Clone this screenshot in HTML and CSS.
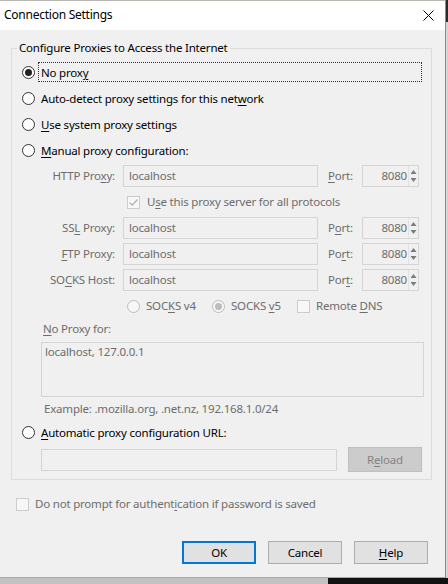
FILE: index.html
```html
<!DOCTYPE html>
<html>
<head>
<meta charset="utf-8">
<link rel="stylesheet" href="styles.css">
</head>
<body>
<div class="screen">
  <div class="toprow">
    <div class="win">
      <div class="titlebar">
        <span class="title">Connection Settings</span>
        <svg class="close" width="11" height="11" viewBox="0 0 11 11"><path d="M0.5 0.5L10.5 10.5M10.5 0.5L0.5 10.5" stroke="#000" stroke-width="1" fill="none"/></svg>
      </div>
      <div class="content">
        <fieldset class="group">
          <legend>Configure Proxies to Access the Internet</legend>
          <div class="opt first">
            <span class="radio on"></span><span class="lbl focus">No prox<u>y</u></span>
          </div>
          <div class="opt">
            <span class="radio"></span><span class="lbl">Auto-detect proxy settings for this net<u>w</u>ork</span>
          </div>
          <div class="opt">
            <span class="radio"></span><span class="lbl"><u>U</u>se system proxy settings</span>
          </div>
          <div class="opt">
            <span class="radio"></span><span class="lbl"><u>M</u>anual proxy configuration:</span>
          </div>
          <div class="manual">
            <div class="prow">
              <span class="plabel">HTTP Pro<u>x</u>y:</span>
              <span class="field host">localhost</span>
              <span class="portlbl"><u>P</u>ort:</span>
              <span class="field port"><span class="num">8080</span><span class="spin"><svg width="7" height="16" viewBox="0 0 7 16"><path d="M3.5 2L6.5 6H0.5Z M3.5 14L6.5 10H0.5Z" fill="#7a7a7a"/></svg></span></span>
            </div>
            <div class="crow">
              <span class="check dis"><svg width="11" height="11" viewBox="0 0 11 11"><path d="M1.5 5.5L4.2 8.2L9.5 2.5" stroke="#b0b0b0" stroke-width="1.2" fill="none"/></svg></span>
              <span class="dlbl">U<u>s</u>e this proxy server for all protocols</span>
            </div>
            <div class="prow">
              <span class="plabel">SS<u>L</u> Proxy:</span>
              <span class="field host">localhost</span>
              <span class="portlbl">P<u>o</u>rt:</span>
              <span class="field port"><span class="num">8080</span><span class="spin"><svg width="7" height="16" viewBox="0 0 7 16"><path d="M3.5 2L6.5 6H0.5Z M3.5 14L6.5 10H0.5Z" fill="#7a7a7a"/></svg></span></span>
            </div>
            <div class="prow">
              <span class="plabel"><u>F</u>TP Proxy:</span>
              <span class="field host">localhost</span>
              <span class="portlbl">Po<u>r</u>t:</span>
              <span class="field port"><span class="num">8080</span><span class="spin"><svg width="7" height="16" viewBox="0 0 7 16"><path d="M3.5 2L6.5 6H0.5Z M3.5 14L6.5 10H0.5Z" fill="#7a7a7a"/></svg></span></span>
            </div>
            <div class="prow">
              <span class="plabel">SO<u>C</u>KS Host:</span>
              <span class="field host">localhost</span>
              <span class="portlbl">Por<u>t</u>:</span>
              <span class="field port"><span class="num">8080</span><span class="spin"><svg width="7" height="16" viewBox="0 0 7 16"><path d="M3.5 2L6.5 6H0.5Z M3.5 14L6.5 10H0.5Z" fill="#7a7a7a"/></svg></span></span>
            </div>
            <div class="srow">
              <span class="sitem"><span class="radio dis"></span><span class="dlbl">SOC<u>K</u>S v4</span></span>
              <span class="sitem"><span class="radio dis on"></span><span class="dlbl">SOCKS <u>v</u>5</span></span>
              <span class="sitem last"><span class="check dis"></span><span class="dlbl">Remote <u>D</u>NS</span></span>
            </div>
          </div>
          <div class="nplabel dlbl"><u>N</u>o Proxy for:</div>
          <div class="tarea">localhost, 127.0.0.1</div>
          <div class="example dlbl">Example: .mozilla.org, .net.nz, 192.168.1.0/24</div>
          <div class="opt auto">
            <span class="radio"></span><span class="lbl"><u>A</u>utomatic proxy configuration URL:</span>
          </div>
          <div class="urlrow">
            <span class="field url"></span>
            <span class="reload">R<u>e</u>load</span>
          </div>
        </fieldset>
        <div class="auth">
          <span class="check dis"></span><span class="dlbl">Do not prompt for authent<u>i</u>cation if password is saved</span>
        </div>
        <div class="buttons">
          <span class="btn default">OK</span>
          <span class="btn">Cancel</span>
          <span class="btn"><u>H</u>elp</span>
        </div>
      </div>
    </div>
    <div class="rstrip"><div class="rdark"></div></div>
  </div>
  <div class="bstrip"><div class="bgray"></div><div class="bblack"></div></div>
</div>
</body>
</html>
```

FILE: styles.css
```css
* { box-sizing: border-box; }
html, body { margin: 0; padding: 0; }
body {
  width: 448px;
  height: 584px;
  overflow: hidden;
  font-family: "Noto Sans", "Open Sans", sans-serif;
  font-size: 11.5px;
  letter-spacing: -0.2px;
  line-height: 16px;
  color: #000;
  background: #c8c8c8;
  white-space: nowrap;
}
u { text-decoration: underline; text-underline-offset: 2px; text-decoration-thickness: 1px; }
.screen { display: flex; flex-direction: column; width: 448px; height: 584px; }
.toprow { display: flex; height: 578px; }
.win {
  width: 446px;
  height: 578px;
  border-right: 1px solid #8c8c8c;
  border-bottom: 1px solid #a8a8a8;
  border-top: 1px solid #b8b8b0;
  background: #f0f0f0;
  display: flex;
  flex-direction: column;
}
.rstrip { width: 2px; background: #d4d4d4; }
.rdark { height: 22px; background: #2a2a2a; }
.bstrip { display: flex; height: 6px; }
.bgray { width: 328px; background: #c2c2c2; }
.bblack { flex: 1; background: #111; }

.titlebar {
  height: 29px;
  background: #fff;
  display: flex;
  align-items: center;
  padding-left: 4px;
  padding-right: 11px;
}
.title { flex: 1; padding-bottom: 1px; font-size: 12px; letter-spacing: -0.25px; }
.close { margin-bottom: 1px; }

.content { flex: 1; display: flex; flex-direction: column; }

.group {
  margin: 10px 0 0 11px;
  width: 421px;
  padding: 0 0 7px 0;
  border: 1px solid #dcdcdc;
  min-width: 0;
}
.group legend {
  margin-left: 5px;
  padding: 0 2px;
  line-height: 16px;
}

.opt { display: flex; align-items: center; height: 20px; margin-top: 6px; padding-left: 10px; }
.opt.first { margin-top: 6px; }
.opt.auto { margin-top: 3px; }
.lbl {
  margin-left: 3px;
  padding: 0 2px;
  height: 20px;
  line-height: 19px;
  border: 1px solid transparent;
}
.lbl.focus { flex: 1; margin-right: 9px; border: 1px dotted #333; }

.radio {
  width: 13px; height: 13px;
  border: 1px solid #333;
  border-radius: 50%;
  background: #fff;
  display: flex; align-items: center; justify-content: center;
  flex: none;
}
.radio.on::after { content: ""; width: 7px; height: 7px; border-radius: 50%; background: #222; }
.radio.dis { border-color: #bcbcbc; background: #f7f7f7; }
.radio.dis.on::after { background: #bcbcbc; }

.check {
  width: 13px; height: 13px;
  border: 1px solid #333;
  background: #fff;
  display: flex; align-items: center; justify-content: center;
  flex: none;
}
.check.dis { border-color: #cccccc; background: #f7f7f7; }

.dlbl { color: #6d6d6d; }

.manual { display: flex; flex-direction: column; gap: 4px; margin-top: 5px; }
.prow { display: flex; align-items: center; height: 22px; }
.plabel { width: 103px; text-align: right; color: #6d6d6d; }
.field {
  height: 22px;
  border: 1px solid #d4d4d4;
  background: #f0f0f0;
  color: #6d6d6d;
  display: flex;
  align-items: center;
}
.host { width: 195px; margin-left: 8px; padding-left: 5px; }
.portlbl { width: 34px; margin-left: 10px; color: #6d6d6d; }
.port { width: 57px; }
.num { flex: 1; text-align: right; padding-right: 1px; }
.spin { width: 10px; height: 20px; display: flex; align-items: center; justify-content: center; border-left: 1px solid #e2e2e2; }

.crow { display: flex; align-items: center; height: 22px; padding-left: 115px; }
.crow .dlbl { margin-left: 7px; }

.srow { display: flex; align-items: center; height: 22px; padding-left: 115px; }
.sitem { display: flex; align-items: center; width: 85px; flex: none; }
.sitem.last { width: auto; }
.sitem .dlbl { margin-left: 6px; }

.nplabel { height: 20px; line-height: 20px; margin-top: 2px; padding-left: 31px; }
.tarea {
  margin: 3px 0 0 29px;
  width: 383px;
  height: 55px;
  border: 1px solid #d4d4d4;
  padding: 1px 3px;
  color: #6d6d6d;
}
.example { height: 20px; line-height: 20px; margin-top: 2px; padding-left: 32px; }

.urlrow { display: flex; align-items: center; height: 25px; margin-top: 5px; padding-left: 29px; }
.url { width: 296px; }
.reload {
  margin-left: 11px;
  width: 74px;
  height: 25px;
  background: #cccccc;
  border: 1px solid #bfbfbf;
  color: #838383;
  display: flex; align-items: center; justify-content: center;
}

.auth { display: flex; align-items: center; height: 20px; margin-top: 14px; padding-left: 16px; }
.auth .dlbl { margin-left: 6px; }

.buttons { display: flex; justify-content: flex-end; gap: 12px; margin-top: 27px; padding-right: 17px; }
.btn {
  width: 74px; height: 23px;
  background: #e1e1e1;
  border: 1px solid #adadad;
  display: flex; align-items: center; justify-content: center;
}
.btn.default { border: 2px solid #0078d7; }
```
